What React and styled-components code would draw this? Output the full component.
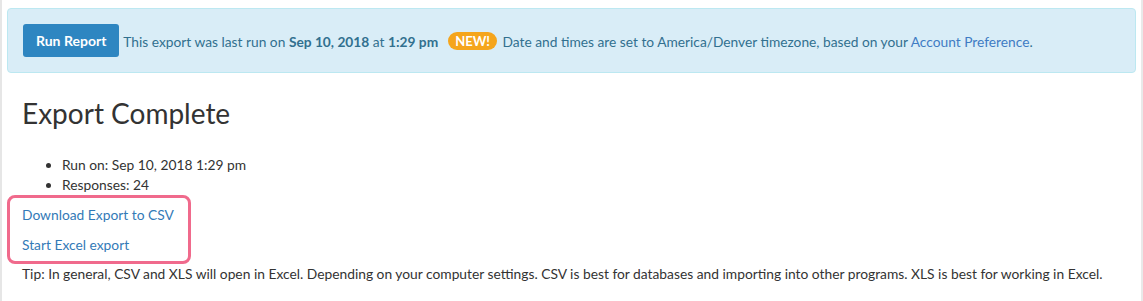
import React from 'react';
import styled, { createGlobalStyle } from 'styled-components';

const GlobalStyle = createGlobalStyle`
  body {
    margin: 0;
    background: #ffffff;
    font-family: Lato, "Open Sans", Arial, sans-serif;
    font-size: 13.8px;
    color: #333333;
  }
`;

const Page = styled.div`
  min-height: 301px;
  box-sizing: border-box;
  border-left: 2px solid #e6e6e6;
  border-right: 2px solid #e9e9e9;
  padding: 8px 5px 0 5px;
`;

const Alert = styled.div`
  display: flex;
  align-items: center;
  gap: 4px;
  padding: 15px;
  background: #d9edf7;
  border: 1px solid #bce8f1;
  border-radius: 4px;
  color: #31708f;
  font-size: 13.75px;
  margin-bottom: 20px;
`;

const RunButton = styled.button`
  height: 33px;
  padding: 0 13px;
  background: #2e86c1;
  color: #ffffff;
  border: none;
  border-radius: 3px;
  font-family: inherit;
  font-size: 14px;
  font-weight: 700;
  cursor: pointer;
`;

const AlertText = styled.span`
  white-space: nowrap;
  strong {
    font-weight: 700;
  }
`;

const Badge = styled.span`
  display: inline-block;
  margin: 0 2px 0 10px;
  padding: 1px 7px;
  background: #f5a51c;
  color: #ffffff;
  border-radius: 10px;
  font-size: 13px;
  font-weight: 700;
  line-height: 16px;
  vertical-align: 1px;
`;

const Link = styled.a`
  color: ${(p) => (p.$inAlert ? '#3f7cc4' : '#337ab7')};
  text-decoration: none;
  white-space: nowrap;
  cursor: pointer;
`;

const Content = styled.div`
  padding: 0 15px;
`;

const Title = styled.h2`
  margin: 24px 0 25px;
  font-size: 28px;
  font-weight: 400;
  line-height: 33px;
  color: #333333;
`;

const Details = styled.ul`
  margin: 0;
  padding-left: 40px;
  line-height: 20px;
`;

const Highlight = styled.div`
  width: 184px;
  box-sizing: border-box;
  margin-left: -15px;
  padding: 7px 0 6px 12px;
  border: 3px solid #f06a8c;
  border-radius: 8px;
  display: flex;
  flex-direction: column;
  align-items: flex-start;
  gap: 10px;
  line-height: 20px;
`;

const Tip = styled.p`
  margin: 0;
  line-height: 20px;
`;

export default function App() {
  return (
    <>
      <GlobalStyle />
      <Page>
        <Alert>
          <RunButton>Run Report</RunButton>
          <AlertText>
            This export was last run on <strong>Sep 10, 2018</strong> at{' '}
            <strong>1:29 pm</strong>
            <Badge>NEW!</Badge> Date and times are set to America/Denver timezone, based on your{' '}
            <Link $inAlert>Account Preference</Link>.
          </AlertText>
        </Alert>
        <Content>
          <Title>Export Complete</Title>
          <Details>
            <li>Run on: Sep 10, 2018 1:29 pm</li>
            <li>Responses: 24</li>
          </Details>
          <Highlight>
            <Link>Download Export to CSV</Link>
            <Link>Start Excel export</Link>
          </Highlight>
          <Tip>
            Tip: In general, CSV and XLS will open in Excel. Depending on your computer settings. CSV is
            best for databases and importing into other programs. XLS is best for working in Excel.
          </Tip>
        </Content>
      </Page>
    </>
  );
}
